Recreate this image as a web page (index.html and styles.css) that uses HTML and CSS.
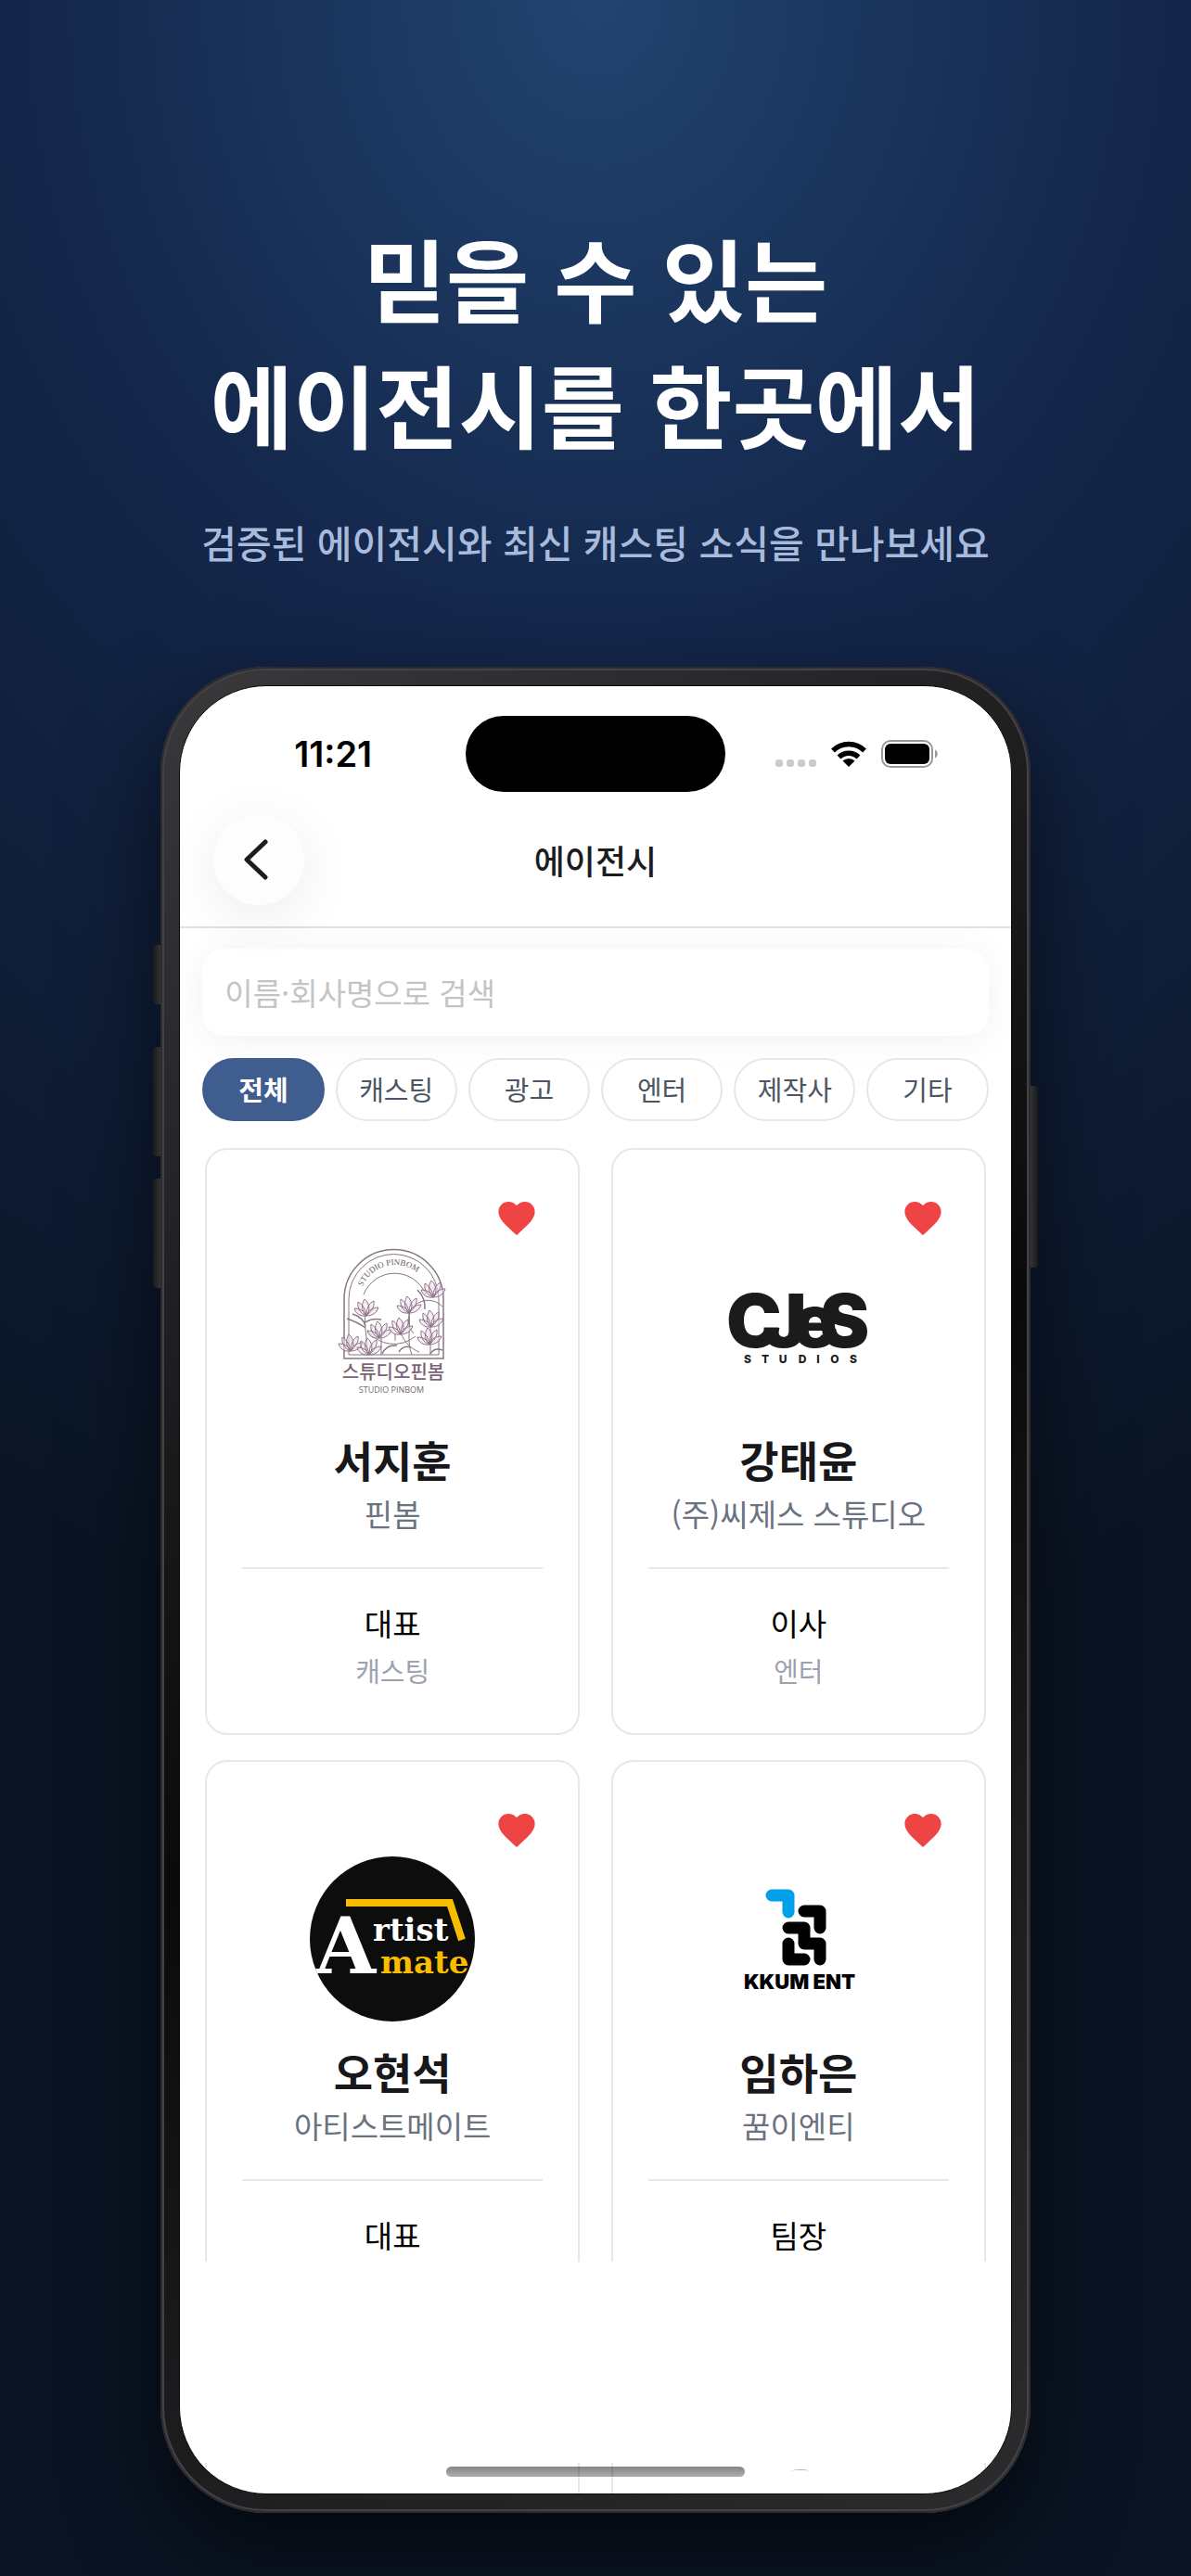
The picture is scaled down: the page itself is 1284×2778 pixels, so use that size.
FILE: index.html
```html
<!DOCTYPE html>
<html lang="ko">
<head>
  <meta charset="UTF-8">
  <meta name="viewport" content="width=device-width, initial-scale=1">
  <title>에이전시</title>
  <link rel="stylesheet" href="styles.css">
</head>
<body>
  <header class="hero">
    <h1>믿을 수 있는<br>에이전시를 한곳에서</h1>
    <p>검증된 에이전시와 최신 캐스팅 소식을 만나보세요</p>
  </header>

  <div class="phone">
    <!-- Hardware buttons -->
    <span class="side-btn action"></span>
    <span class="side-btn vol-up"></span>
    <span class="side-btn vol-down"></span>
    <span class="side-btn power"></span>

    <main class="screen">
      <div class="status-bar">
        <span class="time">11:21</span>
        <span class="island"></span>
        <span class="status-icons">
          <svg class="signal" viewBox="0 0 44 8" aria-hidden="true">
            <g fill="#cbcbcb">
              <rect x="0" y="0" width="8" height="8" rx="3"/>
              <rect x="12" y="0" width="8" height="8" rx="3"/>
              <rect x="24" y="0" width="8" height="8" rx="3"/>
              <rect x="36" y="0" width="8" height="8" rx="3"/>
            </g>
          </svg>
          <svg class="wifi" viewBox="0 0 38 28" aria-hidden="true">
            <g fill="none" stroke="#000" stroke-width="5.500">
              <path d="M2 10.500 A24 24 0 0 1 36 10.500"/>
              <path d="M8.500 17.500 A15 15 0 0 1 29.500 17.500"/>
            </g>
            <path d="M12.500 21.500 A9.500 9.500 0 0 1 25.500 21.500 L19 28 Z"/>
          </svg>
          <svg class="battery" viewBox="0 0 62 30" aria-hidden="true">
            <rect x="1" y="1" width="54" height="28" rx="9" fill="none" stroke="#999" stroke-width="2"/>
            <rect x="4" y="4" width="48" height="22" rx="6"/>
            <path d="M58 10.500 A5 5 0 0 1 58 19.500 Z" fill="#999"/>
          </svg>
        </span>
      </div>

      <div class="nav-bar">
        <button class="back" type="button" aria-label="뒤로">
          <svg viewBox="0 0 28 44" aria-hidden="true">
            <path d="M24 3 L4 22 L24 41" fill="none" stroke="#1c1c1e" stroke-width="5" stroke-linecap="round" stroke-linejoin="round"/>
          </svg>
        </button>
        <h2>에이전시</h2>
      </div>

      <div class="filters">
        <input class="search" type="text" placeholder="이름·회사명으로 검색" aria-label="이름·회사명으로 검색">
        <div class="chips">
          <button class="chip active" type="button">전체</button>
          <button class="chip" type="button">캐스팅</button>
          <button class="chip" type="button">광고</button>
          <button class="chip" type="button">엔터</button>
          <button class="chip" type="button">제작사</button>
          <button class="chip" type="button">기타</button>
        </div>
      </div>

      <section class="list">
        <article class="card">
          <button class="like" type="button" aria-label="관심">
            <svg viewBox="2 3 20 18.350"><path d="M12 21.350l-1.450-1.320C5.400 15.360 2 12.280 2 8.500 2 5.420 4.420 3 7.500 3c1.740 0 3.410.810 4.500 2.090C13.090 3.810 14.760 3 16.500 3 19.580 3 22 5.420 22 8.500c0 3.780-3.400 6.860-8.550 11.540L12 21.350z"/></svg>
          </button>
          <!-- Studio Pinbom -->
          <svg class="logo" viewBox="0 0 178 178" role="img" aria-label="STUDIO PINBOM">
            <defs>
              <path id="arch-text" d="M54 60 A38 38 0 0 1 130 60"/>
              <g id="flower">
                <path d="M0 9 C-5 4 -6 -3 -2 -9 C3 -5 5 3 0 9 M0 9 C5 4 9 0 8 -7 C3 -5 0 1 0 9 M0 9 C-7 6 -10 1 -9 -6 C-4 -3 -1 2 0 9 M0 9 C6 9 11 6 13 0 C7 0 2 3 0 9 M0 9 C-7 10 -12 6 -13 1 C-7 1 -2 4 0 9"/>
              </g>
            </defs>
            <g fill="none" stroke="#85777f" stroke-width="1.500">
              <path d="M37 123 V59 A53.500 53.500 0 0 1 144 59 V123 Z"/>
              <path d="M42 119 V59 A48.500 48.500 0 0 1 139 59 V119 Z" stroke-width="1"/>
              <path d="M58 54 A36 36 0 0 1 125 54 M62 93 A36 36 0 0 0 114 99 M112 96 A20 20 0 0 1 143 67" stroke-width="1"/>
              <path d="M60 76 C58 88 62 98 62 119 M107 74 C109 90 104 104 110 119 M77 100 V119 M98 96 C103 106 108 112 118 116 M130 86 V119 M92 97 V104" stroke-width="1"/>
              <path d="M46 75 Q58 79 60 88 M60 84 Q67 79 77 81 M116 49 Q125 58 124 70 M78 118 Q82 108 94 109 M96 116 Q101 108 109 111 M130 118 Q134 111 143 114 M40 80 Q52 84 60 90"/>
            </g>
            <g fill="#ece2eb" fill-opacity=".6" stroke="#8d7088" stroke-width="1">
              <use href="#flower" x="61" y="68"/>
              <use href="#flower" x="107" y="65"/>
              <use href="#flower" x="133" y="48"/>
              <use href="#flower" x="131" y="80"/>
              <use href="#flower" x="75" y="92"/>
              <use href="#flower" x="98" y="88"/>
              <use href="#flower" x="129" y="99"/>
              <use href="#flower" x="44" y="106"/>
              <use href="#flower" x="64" y="110"/>
            </g>
            <text class="arch-label"><textPath href="#arch-text" startOffset="42%">STUDIO PINBOM</textPath></text>
            <text class="pinbom-ko" x="90" y="145">스튜디오핀봄</text>
            <text class="pinbom-en" x="88" y="160">STUDIO PINBOM</text>
          </svg>
          <h3>서지훈</h3>
          <p class="company">핀봄</p>
          <hr>
          <p class="role">대표</p>
          <p class="category">캐스팅</p>
        </article>

        <article class="card">
          <button class="like" type="button" aria-label="관심">
            <svg viewBox="2 3 20 18.350"><path d="M12 21.350l-1.450-1.320C5.400 15.360 2 12.280 2 8.500 2 5.420 4.420 3 7.500 3c1.740 0 3.410.810 4.500 2.090C13.090 3.810 14.760 3 16.500 3 19.580 3 22 5.420 22 8.500c0 3.780-3.400 6.860-8.550 11.540L12 21.350z"/></svg>
          </button>
          <!-- CJeS Studios -->
          <svg class="logo" viewBox="0 0 178 178" role="img" aria-label="CJeS STUDIOS">
            <g class="cjes">
              <text x="11" y="111">C</text>
              <text x="50" y="111">J</text>
              <text x="82" y="111">e</text>
              <text x="112" y="111">S</text>
            </g>
            <g class="cjes-sub">
              <text x="34" y="128">S</text>
              <text x="53" y="128">T</text>
              <text x="72" y="128">U</text>
              <text x="93" y="128">D</text>
              <text x="110" y="128">I</text>
              <text x="128" y="128">O</text>
              <text x="148" y="128">S</text>
            </g>
          </svg>
          <h3>강태윤</h3>
          <p class="company">(주)씨제스 스튜디오</p>
          <hr>
          <p class="role">이사</p>
          <p class="category">엔터</p>
        </article>

        <article class="card">
          <button class="like" type="button" aria-label="관심">
            <svg viewBox="2 3 20 18.350"><path d="M12 21.350l-1.450-1.320C5.400 15.360 2 12.280 2 8.500 2 5.420 4.420 3 7.500 3c1.740 0 3.410.810 4.500 2.090C13.090 3.810 14.760 3 16.500 3 19.580 3 22 5.420 22 8.500c0 3.780-3.400 6.860-8.550 11.540L12 21.350z"/></svg>
          </button>
          <!-- Artist mate -->
          <svg class="logo round" viewBox="0 0 178 178" role="img" aria-label="Artist mate">
            <rect width="178" height="178" fill="#0d0d0d"/>
            <path d="M39 50 H151 L164 90" fill="none" stroke="#f9bd00" stroke-width="8"/>
            <g class="artist">
              <text class="big" x="6" y="126">A</text>
              <text x="68" y="91">rtist</text>
              <text class="mate" x="76" y="126">mate</text>
            </g>
          </svg>
          <h3>오현석</h3>
          <p class="company">아티스트메이트</p>
          <hr>
          <p class="role">대표</p>
        </article>

        <article class="card">
          <button class="like" type="button" aria-label="관심">
            <svg viewBox="2 3 20 18.350"><path d="M12 21.350l-1.450-1.320C5.400 15.360 2 12.280 2 8.500 2 5.420 4.420 3 7.500 3c1.740 0 3.410.810 4.500 2.090C13.090 3.810 14.760 3 16.500 3 19.580 3 22 5.420 22 8.500c0 3.780-3.400 6.860-8.550 11.540L12 21.350z"/></svg>
          </button>
          <!-- KKUM ENT -->
          <svg class="logo" viewBox="0 0 178 178" role="img" aria-label="KKUM ENT">
            <g fill="none" stroke="#000" stroke-width="13" stroke-linecap="round" stroke-linejoin="round">
              <path d="M60 42 H78 V60" stroke="#00a0e9"/>
              <path d="M95 59 H112 V77"/>
              <path d="M78 77 H95 V94 H112 V111"/>
              <path d="M78 94 V111 H95"/>
            </g>
            <text class="kkum" x="90" y="143">KKUM ENT</text>
          </svg>
          <h3>임하은</h3>
          <p class="company">꿈이엔티</p>
          <hr>
          <p class="role">팀장</p>
        </article>
      </section>

      <!-- Next row showing through under the home indicator -->
      <div class="peek">
        <span class="peek-card"></span>
        <span class="peek-card"></span>
        <span class="home-indicator"></span>
        <svg class="peek-arc" viewBox="0 0 26 3" aria-hidden="true"><path d="M2 2.500 Q13 -.500 24 2.500 Q13 1 2 2.500 Z" fill="#999"/></svg>
      </div>
    </main>
  </div>
</body>
</html>
```

FILE: styles.css
```css
* {
  box-sizing: border-box;
}

body {
  margin: 0;
  min-height: 100vh;
  font-family: "Noto Sans CJK KR", "Noto Sans", sans-serif;
  background: radial-gradient(ellipse 120% 65% at 50% 0, #21446f 0%, #14264a 40%, #0a1423 100%) #0a1423;
  display: flex;
  flex-direction: column;
  align-items: center;
  overflow-x: hidden;
}

h1, h2, h3, p {
  margin: 0;
}

button {
  font-family: inherit;
  cursor: pointer;
}

/* Headline */
.hero {
  padding: 230px 40px 103px;
  text-align: center;
}

.hero h1 {
  font-size: 97px;
  line-height: 136px;
  font-weight: 700;
  color: #fff;
}

.hero p {
  margin-top: 50px;
  font-size: 41px;
  line-height: 64px;
  font-weight: 500;
  color: #a9bbdc;
}

/* Phone */
.phone {
  position: relative;
  width: 73%;
  padding: 20px;
  border-radius: 114px;
  background: linear-gradient(145deg, #3a3a3c 0%, #1c1c1e 30%, #0a0a0a 50%, #1c1c1e 72%, #2c2c2e 100%);
  box-shadow: inset 0 0 0 2px #2c2c2e, inset 0 0 0 4px #434345, 0 40px 100px rgba(0, 0, 0, 0.6);
  margin-bottom: 66px;
}

.side-btn {
  position: absolute;
  left: -8px;
  width: 8px;
  border-radius: 4px 0 0 4px;
  background: linear-gradient(90deg, #1a1a1c, #333335);
}

.action {
  top: 300px;
  height: 64px;
}

.vol-up {
  top: 410px;
  height: 118px;
}

.vol-down {
  top: 552px;
  height: 118px;
}

.power {
  left: auto;
  right: -8px;
  top: 452px;
  height: 196px;
  border-radius: 0 4px 4px 0;
  background: linear-gradient(270deg, #1a1a1c, #333335);
}

.screen {
  position: relative;
  overflow: hidden;
  border: 1px solid #0a0a0a;
  border-radius: 94px;
  background: #fff;
}

/* Status bar */
.status-bar {
  display: grid;
  grid-template-columns: 1fr 280px 1fr;
  align-items: center;
  padding-top: 31px;
  height: 114px;
}

.time {
  justify-self: center;
  padding-left: 22px;
  font-family: Inter, sans-serif;
  font-size: 38px;
  line-height: 40px;
  font-weight: 600;
}

.island {
  height: 82px;
  border-radius: 41px;
  background: #000;
}

.status-icons {
  display: flex;
  align-items: center;
  gap: 16px;
  padding-left: 54px;
}

.signal {
  width: 44px;
  height: 8px;
  margin-top: 20px;
}

.wifi {
  width: 38px;
  height: 28px;
}

.battery {
  width: 62px;
  height: 30px;
}

/* Navigation bar */
.nav-bar {
  display: grid;
  grid-template-columns: 98px 1fr 98px;
  align-items: center;
  height: 147px;
  padding: 0 36px;
  border-bottom: 2px solid #e2e2e4;
}

.back {
  display: flex;
  align-items: center;
  justify-content: center;
  width: 98px;
  height: 98px;
  padding: 0 6px 0 0;
  border: none;
  border-radius: 50%;
  background: #fdfdfd;
  box-shadow: 0 12px 60px rgba(0, 0, 0, 0.08);
}

.back svg {
  width: 28px;
  height: 44px;
}

.nav-bar h2 {
  text-align: center;
  font-size: 36px;
  line-height: 52px;
  font-weight: 500;
  color: #1c1c1e;
}

/* Search and category chips */
.filters {
  padding: 22px 24px 29px;
}

.search {
  display: block;
  width: 100%;
  height: 94px;
  padding: 0 24px;
  border: none;
  border-radius: 24px;
  background: #fff;
  box-shadow: 0 4px 40px rgba(0, 0, 0, 0.06);
  font-family: inherit;
  font-size: 33px;
}

.search::placeholder {
  color: #c4c4c6;
}

.chips {
  display: grid;
  grid-template-columns: repeat(6, 1fr);
  gap: 12px;
  margin-top: 24px;
}

.chip {
  height: 68px;
  padding: 0 0 2px;
  border: 2px solid #e5e7eb;
  border-radius: 34px;
  background: #fff;
  font-size: 29px;
  line-height: 40px;
  color: #4b5563;
}

.chip.active {
  border-color: #3f5d8f;
  background: #3f5d8f;
  color: #fff;
  font-weight: 700;
}

/* Agency cards */
.list {
  display: grid;
  grid-template-columns: 1fr 1fr;
  gap: 27px 34px;
  max-height: 1201px;
  padding: 0 27px;
  overflow: hidden;
}

.card {
  position: relative;
  display: flex;
  flex-direction: column;
  align-items: center;
  height: 633px;
  padding: 102px 38px 0;
  border: 2px solid #e5e7eb;
  border-radius: 24px;
  background: #fff;
  text-align: center;
}

.like {
  position: absolute;
  top: 56px;
  right: 46px;
  padding: 0;
  border: none;
  background: none;
}

.like svg {
  display: block;
  width: 40px;
  height: 36px;
  fill: #ef4444;
}

.logo {
  width: 178px;
  height: 178px;
}

.round {
  border-radius: 50%;
}

.card h3 {
  margin-top: 21px;
  font-size: 46px;
  line-height: 64px;
  font-weight: 700;
  color: #18181b;
}

.company,
.role {
  font-size: 33px;
  line-height: 50px;
}

.company {
  margin-top: 2px;
  color: #6b7280;
}

.card hr {
  width: 100%;
  height: 2px;
  margin: 33px 0;
  border: none;
  background: #e5e7eb;
}

.role {
  color: #000;
}

.category {
  margin-top: 4px;
  font-size: 29px;
  line-height: 44px;
  color: #9ca3af;
}

/* Logo lettering */
.arch-label {
  font-family: "Liberation Serif", serif;
  font-size: 9px;
  text-anchor: middle;
  fill: #65565f;
}

.pinbom-ko {
  font-size: 20px;
  font-weight: 500;
  text-anchor: middle;
  fill: #7d6276;
}

.pinbom-en {
  font-family: "Open Sans", sans-serif;
  font-size: 9px;
  text-anchor: middle;
  fill: #75676f;
}

.cjes {
  font-family: Inter, sans-serif;
  font-size: 80px;
  font-weight: 900;
  fill: #1b1b19;
}

.cjes-sub {
  font-family: Inter, sans-serif;
  font-size: 12px;
  font-weight: 800;
  text-anchor: middle;
  fill: #1b1b19;
}

.artist {
  font-family: "DejaVu Serif", serif;
  font-size: 34px;
  font-weight: 700;
  fill: #fff;
}

.artist .big {
  font-size: 84px;
}

.artist .mate {
  fill: #f9bd00;
}

.kkum {
  font-family: Inter, sans-serif;
  font-size: 22px;
  font-weight: 900;
  text-anchor: middle;
}

/* Bottom strip */
.peek {
  position: relative;
  display: grid;
  grid-template-columns: 1fr 1fr;
  gap: 34px;
  height: 33px;
  margin-top: 217px;
  padding: 0 27px;
}

.peek-card {
  border: solid #e5e7eb;
  border-width: 0 2px;
}

.home-indicator {
  position: absolute;
  top: 4px;
  left: 50%;
  width: 322px;
  height: 11px;
  margin-left: -161px;
  border-radius: 6px;
  background: linear-gradient(rgba(0, 0, 0, 0.48), rgba(0, 0, 0, 0.32));
}

.peek-arc {
  position: absolute;
  top: 6px;
  right: 214px;
  width: 26px;
  height: 3px;
}
```
